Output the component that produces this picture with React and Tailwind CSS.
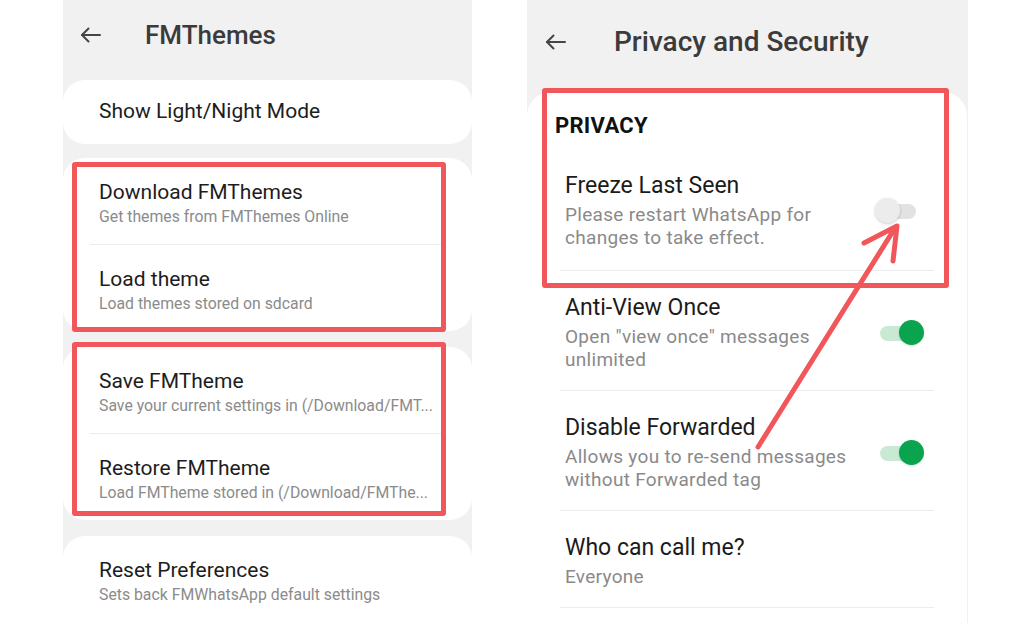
import React from 'react'

const font = { fontFamily: 'Roboto, "Noto Sans", sans-serif' }

function BackArrow() {
  return (
    <svg width="21" height="16" viewBox="0 0 21 16" fill="none" stroke="#454545" strokeWidth="2" strokeLinecap="round" strokeLinejoin="round">
      <path d="M20 8H2" />
      <path d="M8.5 1.5L2 8l6.5 6.5" />
    </svg>
  )
}

function Toggle({ on }) {
  return (
    <div className="relative w-[48px] h-[26px] shrink-0">
      <div className={`absolute left-[4px] right-[7px] top-[6px] h-[15px] rounded-full ${on ? 'bg-[#c9e9d4]' : 'bg-[#e2e2e2]'}`} />
      {on ? (
        <div className="absolute right-0 top-0 w-[25px] h-[25px] rounded-full bg-[#0aa44f] shadow-[0_1px_2px_rgba(0,0,0,0.15)]" />
      ) : (
        <div className="absolute left-0 top-0 w-[25px] h-[25px] rounded-full bg-[#ececec] shadow-[0_1px_3px_rgba(0,0,0,0.2)]" />
      )}
    </div>
  )
}

function ThemeItem({ title, sub, divider }) {
  return (
    <div className={`mx-[27px] pt-[22px] pb-[17px] pl-[9px] ${divider ? 'border-b border-[#ededed]' : ''}`}>
      <div className="text-[21px] leading-[24px] text-[#1d1d1d]">{title}</div>
      <div className="mt-[3px] text-[15.8px] leading-[20px] text-[#8b8b8b] whitespace-nowrap">{sub}</div>
    </div>
  )
}

function PrivacyItem({ title, lines, on }) {
  return (
    <div className="mx-[33px] pl-[5px] pr-[10px] pt-[23px] pb-[19px] border-b border-[#ececec] flex items-center">
      <div className="flex-1">
        <div className="text-[23px] leading-[28px] text-[#1b1b1b]">{title}</div>
        <div className="mt-[3px] text-[19px] leading-[23px] tracking-[0.3px] text-[#8a8a8a]">
          {lines.map((l) => (
            <div key={l}>{l}</div>
          ))}
        </div>
      </div>
      {on !== undefined && <Toggle on={on} />}
    </div>
  )
}

export default function App() {
  return (
    <div className="relative w-[1024px] h-[623px] overflow-hidden bg-white flex" style={font}>
      {/* left phone */}
      <div className="relative ml-[63px] w-[409px] h-full bg-[#f1f1f1] overflow-hidden">
        <div className="h-[80px] pb-[10px] flex items-center">
          <div className="ml-[17px]">
            <BackArrow />
          </div>
          <div className="ml-[44px] text-[26px] font-medium text-[#3b3b3b]">FMThemes</div>
        </div>

        <div className="h-[64px] bg-white rounded-[22px] flex items-center pl-[36px]">
          <span className="text-[21px] text-[#1d1d1d]">Show Light/Night Mode</span>
        </div>

        <div className="mt-[14px] bg-white rounded-[22px]">
          <ThemeItem title="Download FMThemes" sub="Get themes from FMThemes Online" divider />
          <ThemeItem title="Load theme" sub="Load themes stored on sdcard" />
        </div>

        <div className="mt-[16px] bg-white rounded-[22px]">
          <ThemeItem title="Save FMTheme" sub="Save your current settings in (/Download/FMT..." divider />
          <ThemeItem title="Restore FMTheme" sub="Load FMTheme stored in (/Download/FMThe..." />
        </div>

        <div className="mt-[16px] bg-white rounded-[22px] h-[120px]">
          <ThemeItem title="Reset Preferences" sub="Sets back FMWhatsApp default settings" />
        </div>

        <div className="absolute left-[9px] top-[162px] w-[374px] h-[170px] border-[5px] border-[#f0565a] rounded-[3px]" />
        <div className="absolute left-[9px] top-[342px] w-[374px] h-[174px] border-[5px] border-[#f0565a] rounded-[3px]" />
      </div>

      {/* right phone */}
      <div className="relative ml-[55px] w-[441px] h-full bg-[#f1f1f1] overflow-hidden">
        <div className="h-[92px] pb-[8px] flex items-center">
          <div className="ml-[18px]">
            <BackArrow />
          </div>
          <div className="ml-[48px] text-[28px] font-medium text-[#3b3b3b]">Privacy and Security</div>
        </div>

        <div className="mr-[1px] bg-white rounded-t-[24px] h-[560px]">
          <div className="pt-[20px] pl-[28px] text-[22px] leading-[28px] tracking-[0.3px] font-bold text-[#111]">PRIVACY</div>
          <div className="mt-[32px] mx-[33px] pl-[5px] pr-[11px] pb-[21px] border-b border-[#ececec] flex items-center">
            <div className="flex-1">
              <div className="text-[23px] leading-[28px] text-[#1b1b1b]">Freeze Last Seen</div>
              <div className="mt-[3px] text-[19px] leading-[23px] tracking-[0.3px] text-[#8a8a8a]">
                <div>Please restart WhatsApp for</div>
                <div>changes to take effect.</div>
              </div>
            </div>
            <Toggle on={false} />
          </div>
          <PrivacyItem title="Anti-View Once" lines={['Open "view once" messages', 'unlimited']} on />
          <PrivacyItem title="Disable Forwarded" lines={['Allows you to re-send messages', 'without Forwarded tag']} on />
          <PrivacyItem title="Who can call me?" lines={['Everyone']} />
        </div>

        <div className="absolute left-[15px] top-[88px] w-[407px] h-[200px] border-[5px] border-[#f0565a] rounded-[3px]" />
      </div>

      <svg className="absolute inset-0 pointer-events-none" width="1024" height="623" viewBox="0 0 1024 623" fill="none">
        <path d="M758 447L895 228" stroke="#f0565a" strokeWidth="5" strokeLinecap="round" />
        <path d="M864 243L897 226L893 261" stroke="#f0565a" strokeWidth="5" strokeLinecap="round" strokeLinejoin="round" />
      </svg>
    </div>
  )
}
